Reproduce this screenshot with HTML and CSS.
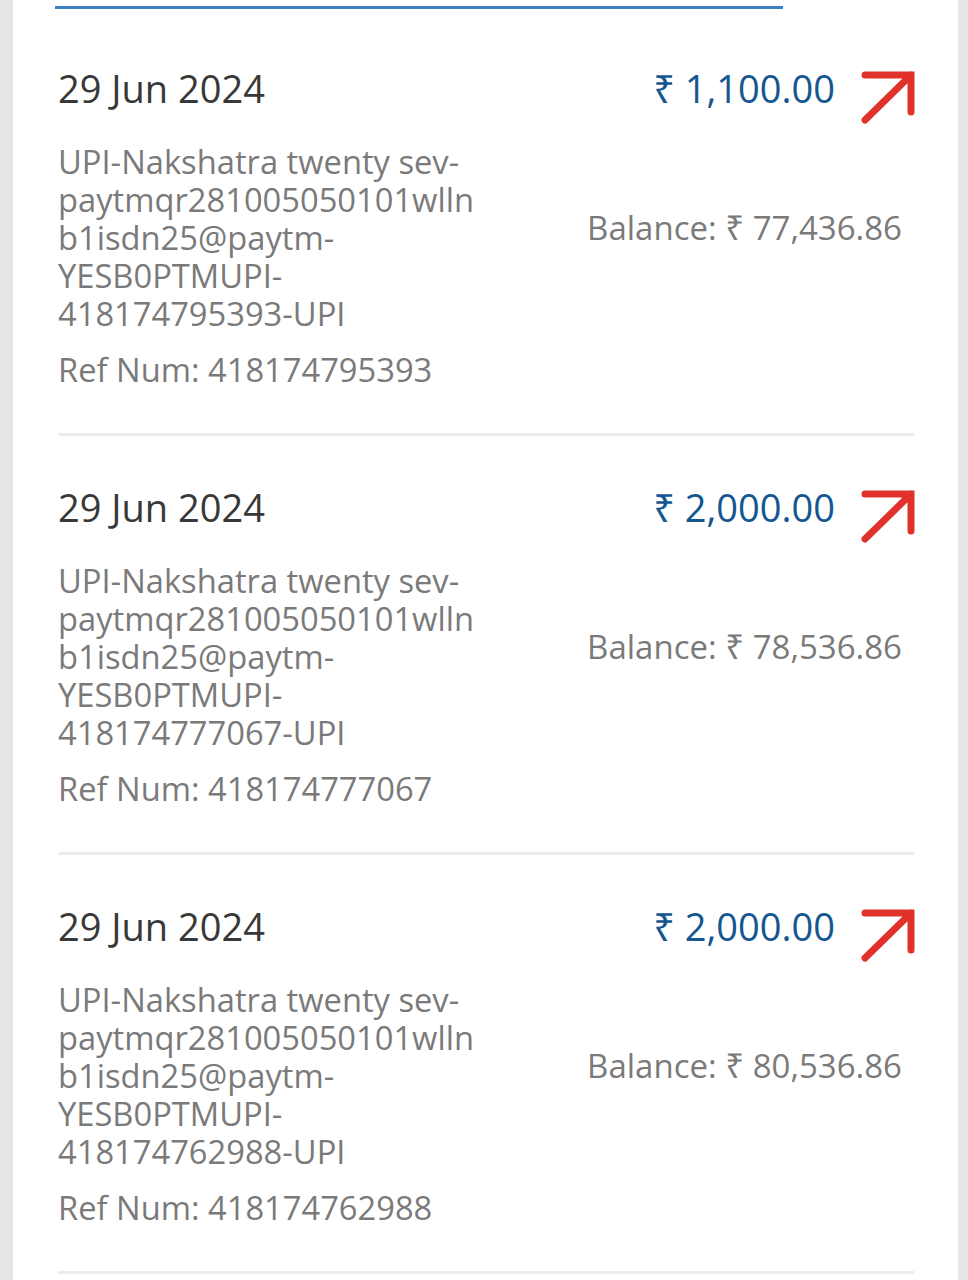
FILE: index.html
```html
<!DOCTYPE html>
<html lang="en">
<head>
<meta charset="UTF-8">
<meta name="viewport" content="width=device-width, initial-scale=1.0">
<title>Transactions</title>
<link rel="stylesheet" href="styles.css">
</head>
<body>

<div class="panel">
  <div class="tab-line"></div>

  <div class="txn">
    <div class="txn-info">
      <div class="txn-date">29 Jun 2024</div>
      <div class="txn-desc">UPI-Nakshatra twenty sev-<br>paytmqr281005050101wlln<br>b1isdn25@paytm-<br>YESB0PTMUPI-<br>418174795393-UPI</div>
      <div class="txn-ref">Ref Num: 418174795393</div>
    </div>
    <div class="txn-side">
      <div class="txn-amount">
        <span>₹ 1,100.00</span>
        <svg class="arrow" viewBox="0 0 58 58"><path d="M8 7 H54 V44 M54 7 L8 52"/></svg>
      </div>
      <div class="txn-balance">Balance: ₹ 77,436.86</div>
    </div>
  </div>

  <div class="txn">
    <div class="txn-info">
      <div class="txn-date">29 Jun 2024</div>
      <div class="txn-desc">UPI-Nakshatra twenty sev-<br>paytmqr281005050101wlln<br>b1isdn25@paytm-<br>YESB0PTMUPI-<br>418174777067-UPI</div>
      <div class="txn-ref">Ref Num: 418174777067</div>
    </div>
    <div class="txn-side">
      <div class="txn-amount">
        <span>₹ 2,000.00</span>
        <svg class="arrow" viewBox="0 0 58 58"><path d="M8 7 H54 V44 M54 7 L8 52"/></svg>
      </div>
      <div class="txn-balance">Balance: ₹ 78,536.86</div>
    </div>
  </div>

  <div class="txn">
    <div class="txn-info">
      <div class="txn-date">29 Jun 2024</div>
      <div class="txn-desc">UPI-Nakshatra twenty sev-<br>paytmqr281005050101wlln<br>b1isdn25@paytm-<br>YESB0PTMUPI-<br>418174762988-UPI</div>
      <div class="txn-ref">Ref Num: 418174762988</div>
    </div>
    <div class="txn-side">
      <div class="txn-amount">
        <span>₹ 2,000.00</span>
        <svg class="arrow" viewBox="0 0 58 58"><path d="M8 7 H54 V44 M54 7 L8 52"/></svg>
      </div>
      <div class="txn-balance">Balance: ₹ 80,536.86</div>
    </div>
  </div>
</div>

</body>
</html>
```

FILE: styles.css
```css
* {
  box-sizing: border-box;
  margin: 0;
  padding: 0;
}

body {
  font-family: "Open Sans", "Noto Sans", "DejaVu Sans", sans-serif;
  background-color: #e6e6e6;
  height: 1280px;
  overflow: hidden;
}

.panel {
  margin: 0 10px 0 13px;
  padding: 0 44px 0 45px;
  background-color: #fff;
  min-height: 1280px;
}

/* resto de la pestaña activa */
.tab-line {
  margin-left: -3px;
  padding-top: 6px;
  width: 728px;
  height: 9px;
  border-bottom: 3px solid #3d7fc6;
}

.txn {
  display: flex;
  justify-content: space-between;
  padding: 57px 0 44px;
  border-bottom: 3px solid #ececec;
}

.txn + .txn {
  padding-top: 49px;
}

.txn-date {
  font-size: 38px;
  line-height: 44px;
  color: #383838;
}

.txn-desc {
  margin-top: 33px;
  font-size: 32.7px;
  line-height: 38px;
  color: #7a7a7a;
}

.txn-ref {
  margin-top: 18px;
  font-size: 32.7px;
  line-height: 38px;
  color: #7a7a7a;
}

.txn-side {
  display: flex;
  flex-direction: column;
  align-items: flex-end;
}

.txn-amount {
  display: flex;
  align-items: center;
  gap: 22px;
  height: 44px;
  font-size: 38px;
  color: #14568f;
}

.arrow {
  width: 58px;
  height: 58px;
  margin-top: 18px;
  margin-right: -1px;
  fill: none;
  stroke: #e0322b;
  stroke-width: 7;
  stroke-linecap: round;
}

.txn-balance {
  margin-top: 99px;
  margin-right: 12px;
  font-size: 33px;
  line-height: 38px;
  color: #7a7a7a;
}
```
